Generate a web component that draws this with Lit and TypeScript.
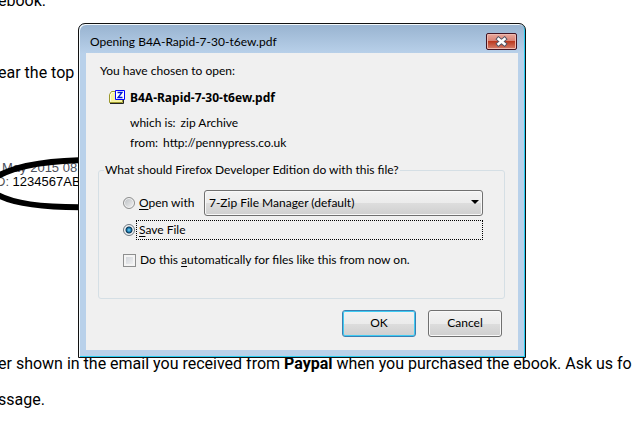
import { LitElement, html, css } from "lit";
import { customElement, state } from "lit/decorators.js";

@customElement("download-dialog")
export class DownloadDialog extends LitElement {
  static styles = css`
    :host {
      display: block;
      font: 12px/20px Lato, "Noto Sans", sans-serif;
      color: #000;
    }
    .frame {
      box-sizing: border-box;
      border: 1px solid #111;
      border-radius: 7px 7px 0 0;
      padding: 0 6px 6px;
      background: linear-gradient(#98b3d0, #b9d1ea 30px);
      box-shadow: inset 1px 1px #f4fafd, inset -1px -1px #27cdf2;
    }
    .titlebar {
      display: flex;
      align-items: center;
      justify-content: space-between;
      height: 29px;
      padding: 0 2px 0 5px;
    }
    .title {
      margin: 0;
      padding-top: 6px;
      font-size: 12px;
      font-weight: 400;
    }
    .close {
      display: flex;
      align-items: center;
      justify-content: center;
      width: 31px;
      height: 17px;
      margin-top: 6px;
      padding: 0;
      border: 1px solid #431422;
      border-radius: 2px;
      background: linear-gradient(#e9a99d, #d98274 45%, #bb3a20 50%, #d5806c);
      box-shadow: inset 0 0 0 1px #eeb8ae;
    }
    .body {
      margin: 0 1px 1px;
      padding: 8px 12px 13px;
      background: #f0f0f0;
    }
    p {
      margin: 0;
      padding-left: 2px;
    }
    .file {
      display: flex;
      align-items: center;
      gap: 4px;
      margin-top: 7px;
      padding-left: 11px;
      font-family: "Noto Sans", sans-serif;
      font-weight: 700;
    }
    .facts {
      margin: 5px 0 0;
      padding-left: 32px;
    }
    .fact {
      display: flex;
      gap: 5px;
    }
    dd {
      margin: 0;
    }
    fieldset {
      min-width: 0;
      margin: 7px 1px 0 0;
      padding: 10px 21px 28px 24px;
      border: 1px solid #d5dfe5;
      border-radius: 3px;
    }
    legend {
      margin-left: -19px;
      padding: 0 1px;
    }
    .row {
      display: flex;
      align-items: center;
      gap: 4px;
    }
    .row label {
      white-space: nowrap;
    }
    .open label {
      min-width: 56px;
    }
    u {
      text-underline-offset: 2px;
    }
    .pick {
      position: relative;
      flex: 1;
      display: flex;
      margin-left: 5px;
    }
    select {
      appearance: none;
      width: 100%;
      height: 26px;
      padding: 0 20px 1px 4px;
      border: 1px solid #707070;
      border-radius: 3px;
      background: linear-gradient(#f2f2f2, #ebebeb 50%, #dddddd 50%, #cfcfcf);
      box-shadow: inset 0 0 0 1px #f8f8f8;
      font: inherit;
      color: inherit;
    }
    .arrow {
      position: absolute;
      right: 4px;
      top: 10px;
      pointer-events: none;
    }
    input {
      appearance: none;
      flex: none;
      box-sizing: border-box;
      width: 12px;
      height: 12px;
      margin: 0;
      border: 1px solid #8e8f8f;
    }
    input[type="radio"] {
      border-radius: 50%;
      background: linear-gradient(135deg, #b8bcc0, #f4f4f4);
      box-shadow: inset 0 0 0 1px #f4f4f4;
    }
    input[type="radio"]:checked {
      border-color: #6f7880;
      background: radial-gradient(circle at 5px 5px, #7fd8f8 0, #1478ae 2px, #0c3350 3px, #e8eef2 4px);
    }
    input[type="checkbox"] {
      width: 13px;
      height: 13px;
      background: linear-gradient(135deg, #cbcfd5, #f6f6f6);
      box-shadow: inset 0 0 0 2px #f4f4f4;
    }
    input[type="checkbox"]:checked {
      background: #26618c;
    }
    .save {
      margin-top: 4px;
    }
    .save label {
      flex: 1;
      box-sizing: border-box;
      height: 20px;
      margin-left: -3px;
      padding-left: 2px;
      border: 1px dotted #000;
      line-height: 18px;
    }
    .auto {
      margin-top: 10px;
    }
    .actions {
      display: flex;
      justify-content: flex-end;
      gap: 12px;
      margin-top: 11px;
      padding-right: 4px;
    }
    .action {
      width: 74px;
      height: 27px;
      padding: 0 0 1px;
      border: 1px solid #707070;
      border-radius: 3px;
      background: linear-gradient(#f2f2f2, #ebebeb 50%, #dddddd 50%, #cfcfcf);
      box-shadow: inset 0 0 0 1px #f8f8f8;
      font: inherit;
      color: inherit;
    }
    .default {
      border-color: #3c7fb1;
      box-shadow: inset 0 0 0 1px #3fcbf3;
    }
  `;

  @state() private mode = "save";

  private choose(mode: string) {
    this.mode = mode;
  }

  render() {
    return html`
      <section class="frame" role="dialog" aria-labelledby="title">
        <header class="titlebar">
          <h1 class="title" id="title">Opening B4A-Rapid-7-30-t6ew.pdf</h1>
          <button class="close" type="button" aria-label="Close">
            <svg width="13" height="11" viewBox="0 0 13 11">
              <path d="M3.5 3 9.5 8M9.5 3 3.5 8" stroke="#535666" stroke-width="4.4" stroke-linecap="square" />
              <path d="M3.5 3 9.5 8M9.5 3 3.5 8" stroke="#fff" stroke-width="2.5" stroke-linecap="square" />
            </svg>
          </button>
        </header>
        <div class="body">
          <p>You have chosen to open:</p>
          <div class="file">
            <svg width="17" height="16" viewBox="0 0 17 16">
              <path d="M0.5 12.5V4.5L2.5 1.5H6L7 3.5H13.5V12.5Z" fill="#f7f3a0" stroke="#9b982d" />
              <path d="M1.5 11.5V5L3 2.5H5" fill="none" stroke="#fffde0" />
              <path d="M1 13.5H14.5V10" fill="none" stroke="#222" />
              <path d="M6.5 0.5H15.5V9.5H6.5Z" fill="#fff" stroke="#00f" />
              <path d="M8.5 2.5H13L9 7.5H13.5" fill="none" stroke="#0018d8" stroke-width="1.3" />
            </svg>
            <span>B4A-Rapid-7-30-t6ew.pdf</span>
          </div>
          <dl class="facts">
            <div class="fact"><dt>which is:</dt><dd>zip Archive</dd></div>
            <div class="fact"><dt>from:</dt><dd>http://pennypress.co.uk</dd></div>
          </dl>
          <fieldset>
            <legend>What should Firefox Developer Edition do with this file?</legend>
            <div class="row open">
              <input type="radio" name="mode" id="open" .checked=${this.mode === "open"} @change=${() => this.choose("open")} />
              <label for="open"><u>O</u>pen with</label>
              <div class="pick">
                <select aria-label="Application">
                  <option>7-Zip File Manager (default)</option>
                </select>
                <svg class="arrow" width="8" height="4" viewBox="0 0 8 4"><path d="M0 0H8L4 4Z" /></svg>
              </div>
            </div>
            <div class="row save">
              <input type="radio" name="mode" id="save" .checked=${this.mode === "save"} @change=${() => this.choose("save")} />
              <label for="save"><u>S</u>ave File</label>
            </div>
            <div class="row auto">
              <input type="checkbox" id="auto" />
              <label for="auto">Do this <u>a</u>utomatically for files like this from now on.</label>
            </div>
          </fieldset>
          <div class="actions">
            <button class="action default" type="button">OK</button>
            <button class="action" type="button">Cancel</button>
          </div>
        </div>
      </section>
    `;
  }
}

@customElement("app-root")
export class AppRoot extends LitElement {
  static styles = css`
    :host {
      display: block;
      position: relative;
      min-height: 100vh;
      overflow: hidden;
      background: #fff;
      color: #000;
      font: 16px/36px Roboto, sans-serif;
    }
    .article {
      margin: -17px 0 0 -2px;
      white-space: nowrap;
    }
    p {
      margin: 0 0 36px;
    }
    .receipt {
      position: relative;
      height: 219px;
      padding-top: 34px;
      box-sizing: border-box;
      font: 13px/14px "Liberation Sans", Arial, sans-serif;
    }
    .date {
      padding-left: 4px;
      color: #4c505c;
    }
    .order {
      margin-left: -2px;
    }
    .label {
      color: #555;
    }
    .circle {
      position: absolute;
      left: -4px;
      top: 26px;
    }
    .dialog {
      position: absolute;
      left: 78px;
      right: 108px;
      top: 23px;
    }
  `;

  render() {
    return html`
      <main class="article">
        <p>ebook.</p>
        <p>ear the top of</p>
        <div class="receipt">
          <div class="date">May 2015 08:15</div>
          <div class="order"><span class="label">D:</span> 1234567AB</div>
          <svg class="circle" width="100" height="60" viewBox="0 0 100 60">
            <path d="M100 7C60 7 24 12 4 23C-7 29-6 37 4 42C22 52 56 55 100 54" fill="none" stroke="#000" stroke-width="6" />
          </svg>
        </div>
        <div>er shown in the email you received from <b>Paypal</b> when you purchased the ebook. Ask us fo</div>
        <div>ssage.</div>
      </main>
      <download-dialog class="dialog"></download-dialog>
    `;
  }
}
